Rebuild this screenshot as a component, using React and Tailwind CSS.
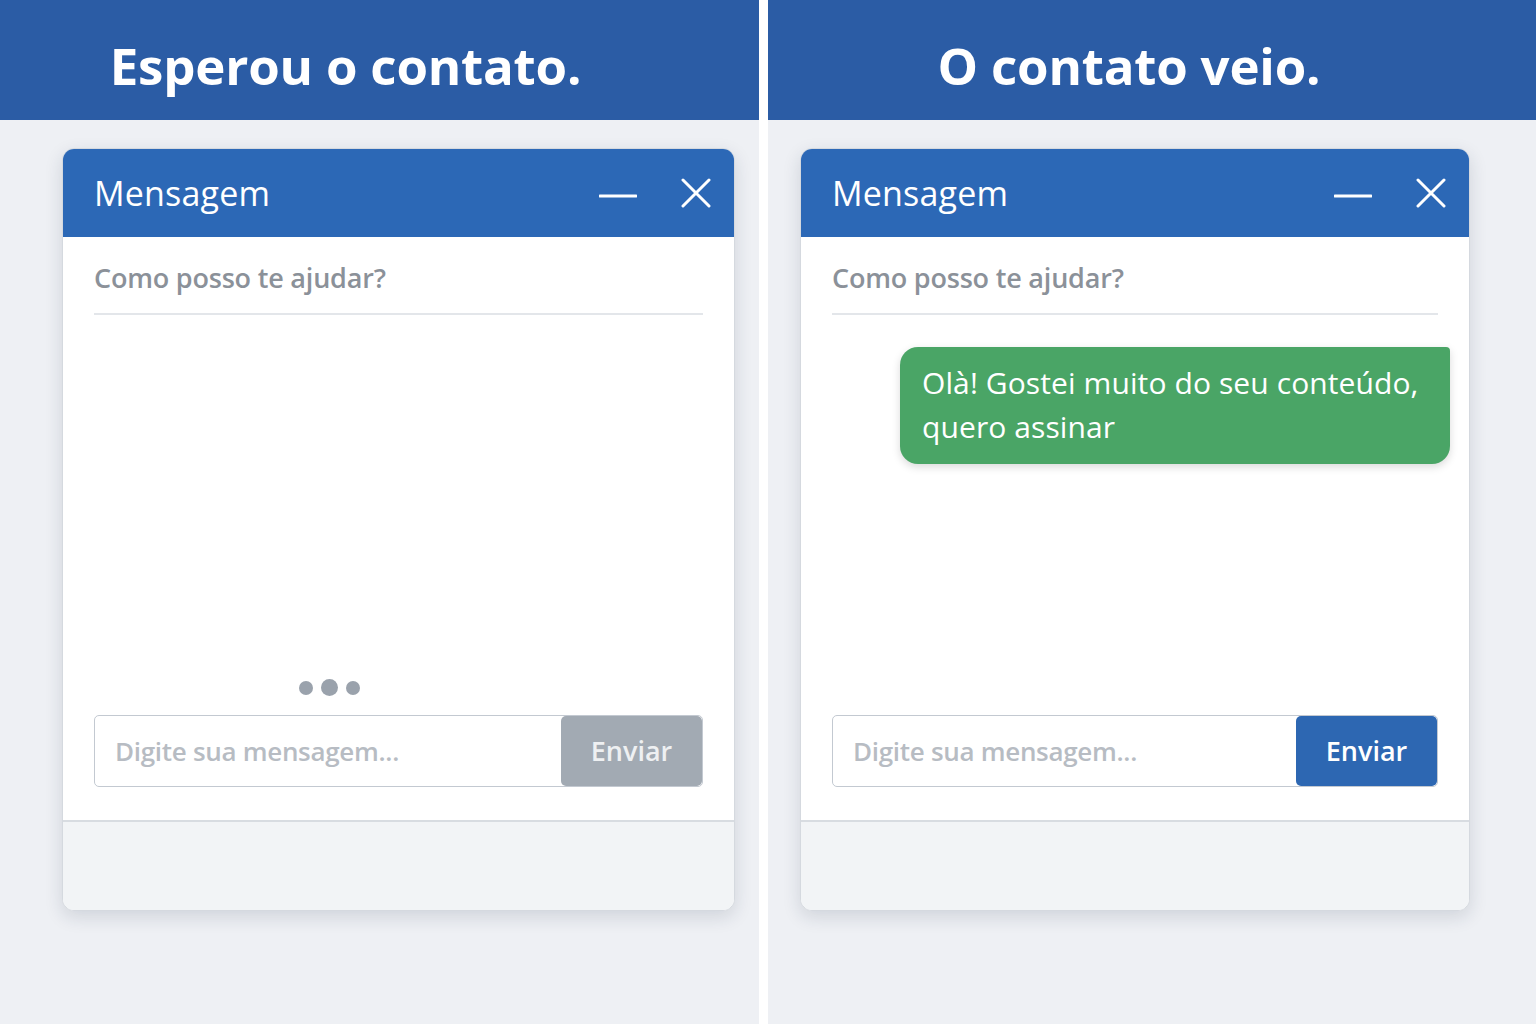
import React from "react";

function MinusIcon() {
  return (
    <svg width="38" height="8" viewBox="0 0 38 8">
      <line x1="1" y1="4" x2="37" y2="4" stroke="white" strokeWidth="3" strokeLinecap="round" />
    </svg>
  );
}

function CloseIcon() {
  return (
    <svg width="30" height="30" viewBox="0 0 30 30">
      <path d="M2 2 L28 28 M28 2 L2 28" stroke="white" strokeWidth="3" strokeLinecap="round" />
    </svg>
  );
}

function JanelaChat({ enviado }) {
  return (
    <div className="flex h-[763px] flex-col overflow-hidden rounded-[12px] border border-[#d5d9df] bg-white shadow-[0_6px_18px_rgba(30,45,70,0.14)]">
      {/* cabeçalho */}
      <div className="flex h-[88px] shrink-0 items-center justify-between bg-[#2c68b6] pl-[31px] pr-[23px]">
        <span className="text-[34px] tracking-[0.2px] text-white">Mensagem</span>
        <div className="flex items-center gap-[44px]">
          <div className="mt-[6px]">
            <MinusIcon />
          </div>
          <CloseIcon />
        </div>
      </div>

      <div className="flex flex-1 flex-col px-[31px]">
        <div className="flex h-[78px] items-end border-b-2 border-[#e3e6ea] pb-[15px]">
          <span className="text-[27px] font-semibold tracking-[-0.2px] text-[#8b9199]">
            Como posso te ajudar?
          </span>
        </div>

        <div className="flex flex-1 flex-col">
          {enviado ? (
            <div className="mt-[32px] -mr-[12px] flex justify-end">
              <div className="w-[550px] rounded-[18px] rounded-tr-[4px] bg-[#4aa566] px-[22px] pb-[15px] pt-[14px] text-[30px] leading-[44px] tracking-[0.1px] text-white shadow-[0_3px_8px_rgba(0,0,0,0.15)]">
                Olà! Gostei muito do seu conteúdo, quero assinar
              </div>
            </div>
          ) : (
            <div className="mt-auto mb-[19px] ml-[205px] flex items-center gap-[8px]">
              <span className="h-[14px] w-[14px] rounded-full bg-[#9aa2ac]" />
              <span className="h-[17px] w-[17px] rounded-full bg-[#9aa2ac]" />
              <span className="h-[14px] w-[14px] rounded-full bg-[#9aa2ac]" />
            </div>
          )}
        </div>

        <div className="mb-[33px] mt-auto flex h-[72px] overflow-hidden rounded-[5px] border border-[#c3c9d1]">
          <div className="flex flex-1 items-center pl-[20px] text-[26px] font-semibold tracking-[-0.3px] text-[#b7bcc3]">
            Digite sua mensagem...
          </div>
          <div
            className={
              enviado
                ? "flex w-[141px] items-center justify-center rounded-[5px] bg-[#2d67b2] text-[27px] font-semibold text-white"
                : "flex w-[141px] items-center justify-center rounded-[5px] bg-[#a2aab3] text-[27px] font-semibold text-[#eef0f2]"
            }
          >
            Enviar
          </div>
        </div>
      </div>

      {/* rodapé */}
      <div className="h-[90px] shrink-0 border-t-2 border-[#d8dce1] bg-[#f2f4f6]" />
    </div>
  );
}

export default function App() {
  return (
    <div
      className="flex h-[1024px] w-[1536px] bg-white"
      style={{ fontFamily: '"Open Sans", "Noto Sans", sans-serif' }}
    >
      <div className="flex w-[759px] flex-col bg-[#eef0f4]">
        <div className="flex h-[120px] items-center justify-center bg-[#2b5ca5] pr-[68px] pt-[10px]">
          <h1 className="text-[51px] font-bold tracking-[-0.2px] text-white">Esperou o contato.</h1>
        </div>
        <div className="pl-[62px] pr-[24px] pt-[28px]">
          <JanelaChat enviado={false} />
        </div>
      </div>

      <div className="ml-[9px] flex w-[768px] flex-col bg-[#eef0f4]">
        <div className="flex h-[120px] items-center justify-center bg-[#2b5ca5] pr-[46px] pt-[10px]">
          <h1 className="text-[51px] font-bold tracking-[-0.2px] text-white">O contato veio.</h1>
        </div>
        <div className="pl-[32px] pr-[66px] pt-[28px]">
          <JanelaChat enviado={true} />
        </div>
      </div>
    </div>
  );
}
